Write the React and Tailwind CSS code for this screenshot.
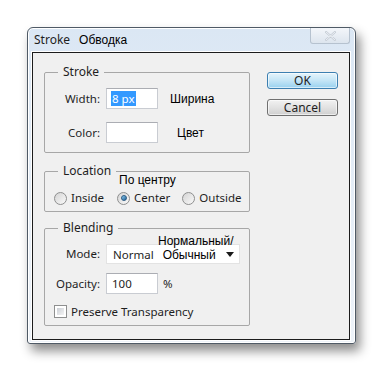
const ui = { fontFamily: '"Noto Sans", "Open Sans", sans-serif' };
const note = { fontFamily: '"Liberation Sans", Arial, sans-serif' };

function Radio({ checked }) {
  return (
    <span className="w-[13px] h-[13px] rounded-full border border-[#8e8f8f] bg-gradient-to-br from-[#d4d4d4] to-[#fafafa] flex items-center justify-center shrink-0">
      {checked && (
        <span className="w-[6px] h-[6px] rounded-full bg-gradient-to-br from-[#8fd0f5] to-[#1e5f93] border border-[#2a5a82]" />
      )}
    </span>
  );
}

function TextBox({ className = "", children }) {
  return (
    <div
      className={`bg-white border border-[#c9ccd2] border-t-[#abadb3] flex items-center ${className}`}
    >
      {children}
    </div>
  );
}

function Group({ title, className = "", children }) {
  return (
    <fieldset className={`border border-[#a7a7a7] rounded-[2px] ${className}`}>
      <legend className="ml-[13px] px-[5px] text-[12px] leading-[16px] text-[#1e1e1e]">{title}</legend>
      {children}
    </fieldset>
  );
}

export default function App() {
  return (
    <div className="w-[383px] h-[372px] bg-white pl-[27px] pt-[27px]" style={ui}>
      {/* window */}
      <div className="w-[329px] h-[317px] rounded-t-[6px] rounded-b-[3px] border border-[#4f5a66] bg-gradient-to-b from-[#dbe7f4] to-[#eef3f9] shadow-[4px_7px_11px_rgba(0,0,0,0.45),inset_0_0_0_1px_#ffffff] flex flex-col">
        {/* title bar */}
        <div className="h-[24px] flex items-center pl-[6px] pr-[5px] text-[12px] text-[#1e1e1e]">
          <span>Stroke</span>
          <span className="ml-[9px] text-black" style={note}>Обводка</span>
          <div className="ml-auto self-start w-[40px] h-[16px] rounded-b-[3px] border border-t-0 border-[#b6c2cf] bg-gradient-to-b from-[#f3f6fa] to-[#dde5ee] flex items-center justify-center">
            <svg width="11" height="10" viewBox="0 0 11 10">
              <path d="M1 1 L10 9 M10 1 L1 9" stroke="#c3cbd4" strokeWidth="2.2" strokeLinecap="round" />
              <path d="M1 1 L10 9 M10 1 L1 9" stroke="#f7f9fb" strokeWidth="0.8" strokeLinecap="round" />
            </svg>
          </div>
        </div>

        {/* client area */}
        <div className="flex-1 ml-[4px] mr-[5px] mb-[3px] border border-[#1c1c1c] shadow-[0_0_0_1px_#ffffff] bg-[#f0f0f0] flex pl-[11px] pt-[11px] text-[11.5px] text-[#1e1e1e]">
          <div className="w-[206px] flex flex-col">
            <Group title="Stroke">
              <div className="flex items-center mt-[8px]">
                <span className="w-[55px] text-right">Width:</span>
                <TextBox className="ml-[6px] w-[52px] h-[21px] pl-[4px]">
                  <span className="bg-[#3399ff] text-white px-[1px] leading-[15px]">8 px</span>
                </TextBox>
                <span className="ml-[12px] text-[12px] text-black" style={note}>Ширина</span>
              </div>
              <div className="flex items-center mt-[13px] mb-[9px]">
                <span className="w-[55px] text-right">Color:</span>
                <TextBox className="ml-[6px] w-[52px] h-[21px]" />
                <span className="ml-[19px] text-[12px] text-black" style={note}>Цвет</span>
              </div>
            </Group>

            <Group title="Location" className="mt-[10px]">
              <div className="relative -mt-[6px] ml-[74px] h-[14px] leading-[14px] text-[12px] text-black" style={note}>
                По центру
              </div>
              <div className="flex items-center h-[14px] mt-[4px] mb-[6px] pl-[9px]">
                <Radio />
                <span className="ml-[4px]">Inside</span>
                <span className="ml-[13px]"><Radio checked /></span>
                <span className="ml-[4px]">Center</span>
                <span className="ml-[12px]"><Radio /></span>
                <span className="ml-[4px]">Outside</span>
              </div>
            </Group>

            <Group title="Blending" className="mt-[8px]">
              <div className="relative z-10 -mt-[1px] ml-[113px] h-[12px] leading-[12px] text-[12px] text-black" style={note}>
                Нормальный/
              </div>
              <div className="flex items-center -mt-[3px]">
                <span className="w-[55px] text-right">Mode:</span>
                <div className="ml-[6px] w-[134px] h-[20px] bg-white border border-[#e3e3e3] flex items-center pl-[6px] pr-[5px] pt-[1px]">
                  <span>Normal</span>
                  <span className="ml-[9px] text-[12px] text-black" style={note}>Обычный</span>
                  <svg className="ml-auto" width="8" height="5" viewBox="0 0 8 5">
                    <path d="M0 0 H8 L4 5 Z" fill="#1a1a1a" />
                  </svg>
                </div>
              </div>
              <div className="flex items-center mt-[9px]">
                <span className="w-[55px] text-right">Opacity:</span>
                <TextBox className="ml-[6px] w-[52px] h-[21px] pl-[5px]">100</TextBox>
                <span className="ml-[5px]">%</span>
              </div>
              <div className="flex items-center mt-[11px] mb-[7px] pl-[9px] h-[13px]">
                <span className="w-[13px] h-[13px] border border-[#8e8f8f] bg-white p-[2px] shrink-0">
                  <span className="block w-full h-full bg-gradient-to-br from-[#cbcfd5] to-[#f4f4f4]" />
                </span>
                <span className="ml-[4px]">Preserve Transparency</span>
              </div>
            </Group>
          </div>

          <div className="ml-[17px] pt-[8px] flex flex-col gap-[10px]">
            <button className="w-[71px] h-[17px] rounded-[3px] border border-[#3c7fb1] bg-gradient-to-b from-[#e5f4fc] via-[#c4e5f6] to-[#98d1ef] text-[12px] leading-none text-[#1e1e1e] shadow-[inset_0_0_0_1px_rgba(255,255,255,0.6)]">
              OK
            </button>
            <button className="w-[71px] h-[17px] rounded-[3px] border border-[#707070] bg-gradient-to-b from-[#f2f2f2] via-[#e2e2e2] to-[#cfcfcf] text-[12px] leading-none text-[#1e1e1e] shadow-[inset_0_0_0_1px_rgba(255,255,255,0.6)]">
              Cancel
            </button>
          </div>
        </div>
      </div>
    </div>
  );
}
